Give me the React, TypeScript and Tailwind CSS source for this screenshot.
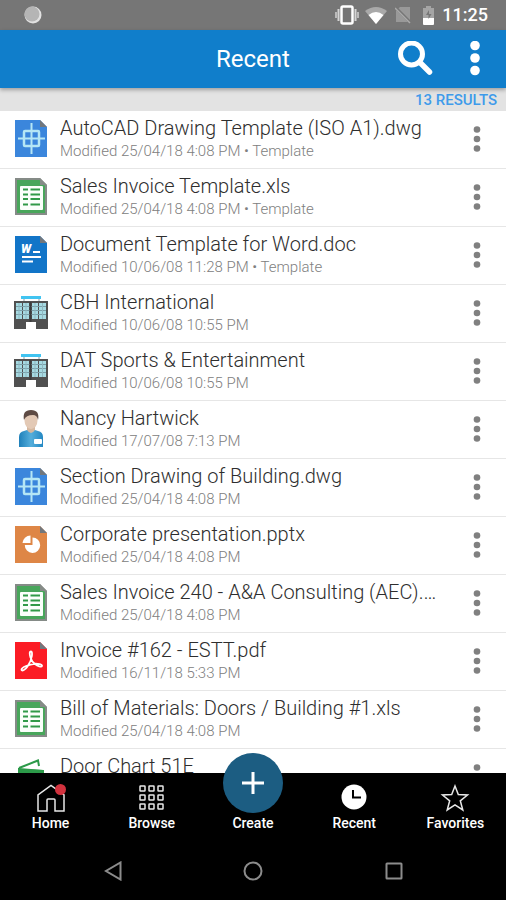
import React from 'react';

type FileKind = 'dwg' | 'xls' | 'doc' | 'ppt' | 'pdf' | 'company' | 'person' | 'chart';

interface RecentItem {
  kind: FileKind;
  title: string;
  meta: string;
}

const items: RecentItem[] = [
  { kind: 'dwg', title: 'AutoCAD Drawing Template (ISO A1).dwg', meta: 'Modified 25/04/18 4:08 PM • Template' },
  { kind: 'xls', title: 'Sales Invoice Template.xls', meta: 'Modified 25/04/18 4:08 PM • Template' },
  { kind: 'doc', title: 'Document Template for Word.doc', meta: 'Modified 10/06/08 11:28 PM • Template' },
  { kind: 'company', title: 'CBH International', meta: 'Modified 10/06/08 10:55 PM' },
  { kind: 'company', title: 'DAT Sports & Entertainment', meta: 'Modified 10/06/08 10:55 PM' },
  { kind: 'person', title: 'Nancy Hartwick', meta: 'Modified 17/07/08 7:13 PM' },
  { kind: 'dwg', title: 'Section Drawing of Building.dwg', meta: 'Modified 25/04/18 4:08 PM' },
  { kind: 'ppt', title: 'Corporate presentation.pptx', meta: 'Modified 25/04/18 4:08 PM' },
  { kind: 'xls', title: 'Sales Invoice 240 - A&A Consulting (AEC).xls', meta: 'Modified 25/04/18 4:08 PM' },
  { kind: 'pdf', title: 'Invoice #162 - ESTT.pdf', meta: 'Modified 16/11/18 5:33 PM' },
  { kind: 'xls', title: 'Bill of Materials: Doors / Building #1.xls', meta: 'Modified 25/04/18 4:08 PM' },
  { kind: 'chart', title: 'Door Chart 51E', meta: 'Modified 25/04/18 4:08 PM' },
];

const Page: React.FC<{ color: string; children: React.ReactNode }> = ({ color, children }) => (
  <svg width="32" height="37" viewBox="0 0 32 37" aria-hidden="true">
    <path d="M0 0H25L32 7V37H0Z" fill={color} />
    <path d="M25 0L32 7H25Z" fill="#72777c" />
    {children}
  </svg>
);

const FileIcon: React.FC<{ kind: FileKind }> = ({ kind }) => {
  switch (kind) {
    case 'dwg':
      return (
        <Page color="#3b86dc">
          <g fill="none" stroke="#b5e6f5" strokeWidth="2">
            <path d="M16.5 3V34M3 18.5H30" />
            <rect x="9" y="11" width="15" height="15" rx="1" strokeWidth="2.5" />
          </g>
        </Page>
      );
    case 'xls':
      return (
        <svg width="32" height="37" viewBox="0 0 32 37" aria-hidden="true">
          <path d="M0 0H25L32 7V37H0Z" fill="#858b87" />
          <path d="M2 2H24.500L30 8V35H2Z" fill="#48a65b" />
          <path d="M25 0L32 7H25Z" fill="#858b87" />
          <rect x="5" y="8" width="23" height="24" rx="1" fill="#fbfffb" />
          <path d="M8 11.500H13M15.500 11.500H25M8 16.500H13M15.500 16.500H25M8 21H13M15.500 21H25M8 26.500H13M15.500 26.500H25" stroke="#319a48" strokeWidth="2" />
        </svg>
      );
    case 'doc':
      return (
        <Page color="#1275c8">
          <text x="6" y="17" fontSize="12" fontWeight="900" fontStyle="italic" fill="#fff" className="font-['Roboto',sans-serif]">W</text>
          <path d="M18 16H25M7 21H26M7 25.500H18" stroke="#fff" strokeWidth="2" />
        </Page>
      );
    case 'ppt':
      return (
        <Page color="#de8646">
          <path d="M17.500 19V11.500A7.700 7.700 0 1 1 9.800 19Z" fill="#fff" />
          <path d="M15.500 17H7.500A8 8 0 0 1 15.500 9.500Z" fill="#fff" />
        </Page>
      );
    case 'pdf':
      return (
        <Page color="#fb1c25">
          <path
            d="M16 9.500C14.200 9.500 14.600 12.500 15.500 15.500C16.200 18 18 20.500 20 22C22.500 24 26.500 25.500 27 24C27.600 22.300 23 21.600 19.500 21.800C14.500 22.100 6.500 25.500 6.500 27.500C6.500 29.600 10 28.300 12.500 24.500C15 20.700 16.500 17 16.900 14C17.200 11 17 9.500 16 9.500Z"
            fill="none"
            stroke="#fff"
            strokeWidth="1.800"
          />
        </Page>
      );
    case 'company':
      return (
        <svg width="34" height="35" viewBox="0 0 34 35" aria-hidden="true">
          <path d="M10 4V7M25 4V7" stroke="#8b9da5" />
          <rect x="7" y="1" width="20" height="3" fill="#41c4f1" />
          <path d="M0 6H34V34H22V27H12V34H0Z" fill="#505050" />
          <path d="M2 8H8V24H2ZM9 8H15V24H9ZM18 8H24V24H18ZM25 8H32V24H25Z" fill="#a6dae2" />
          <path d="M2 11.500H32M2 15.500H32M2 19.500H32" stroke="#7b9fa8" />
          <path d="M5 8V24M12 8V24M21 8V24M28.500 8V24" stroke="#8fb8c1" />
          <path d="M16.500 7V27" stroke="#3c3c3c" strokeWidth="2" />
        </svg>
      );
    case 'person':
      return (
        <svg width="26" height="37" viewBox="0 0 26 37" aria-hidden="true">
          <defs>
            <linearGradient id="shirt" x1="0" y1="0" x2="1" y2="0">
              <stop offset="0" stopColor="#1f80ba" />
              <stop offset="0.5" stopColor="#55aedb" />
              <stop offset="1" stopColor="#2488c3" />
            </linearGradient>
          </defs>
          <path d="M9 15H17V24H9Z" fill="#d5b8a0" />
          <path d="M1 37V27Q1 22 6 21L9 20Q13 26 17 20L20 21Q25 22 25 27V37Z" fill="url(#shirt)" />
          <ellipse cx="13" cy="10.500" rx="6.500" ry="8.500" fill="#e3c9b5" />
          <path d="M6 10Q4 0 13 0Q22 0 20 10Q19 5 15 5Q8 5 6 10Z" fill="#5e4b44" />
          <rect x="16" y="29" width="8" height="5" rx="1" fill="#fff" />
        </svg>
      );
    case 'chart':
      return (
        <svg width="26" height="34" viewBox="0 0 26 34" aria-hidden="true">
          <path d="M1 9L20 1.500L21 7M1 9V33H25V12L1 11" fill="none" stroke="#2c9a49" strokeWidth="2" />
          <path d="M1 9L25 11V14H1Z" fill="#2c9a49" />
        </svg>
      );
  }
};

const StatusBar = () => (
  <div className="flex h-[30px] shrink-0 items-center bg-[#767676] pr-[18px] pl-6 text-white">
    <svg width="18" height="18" viewBox="0 0 18 18" aria-hidden="true">
      <circle cx="9" cy="9" r="8.500" fill="#e2e2e2" />
      <circle cx="8" cy="8" r="7.500" fill="#b5b5b5" />
    </svg>
    <div className="ml-auto flex items-center">
      <svg width="24" height="20" viewBox="0 0 24 20" className="mr-1.5" aria-hidden="true">
        <rect x="6.500" y="1.500" width="11" height="17" rx="1.500" fill="none" stroke="#fff" strokeWidth="2.500" />
        <path d="M3.500 4V16M20.500 4V16" stroke="#d5d5d5" strokeWidth="2" />
        <path d="M1 7V13M23 7V13" stroke="#bbb" strokeWidth="2" />
      </svg>
      <svg width="22" height="17" viewBox="0 0 22 17" className="mr-2" aria-hidden="true">
        <path d="M0 4Q11-4 22 4L11 17Z" fill="#a9a9a9" />
        <path d="M3.500 8Q11 2 18.500 8L11 17Z" fill="#fff" />
      </svg>
      <svg width="16" height="18" viewBox="0 0 16 18" className="mr-3" aria-hidden="true">
        <path d="M5 1H15V16H1V5Z" fill="#999" />
        <path d="M0 1L16 17" stroke="#767676" strokeWidth="3" />
        <path d="M0 2L15 17" stroke="#aaa" strokeWidth="1.500" />
      </svg>
      <svg width="11" height="19" viewBox="0 0 11 19" className="mr-2" aria-hidden="true">
        <path d="M3 0H8V2H11V12H0V2H3Z" fill="#a5a5a5" />
        <path d="M0 12H11V18Q11 19 10 19H1Q0 19 0 18Z" fill="#fff" />
        <path d="M6 4L3 9H5.500V13L8.500 8H6Z" fill="#767676" />
      </svg>
      <span className="text-[18px] leading-5 font-medium">11:25</span>
    </div>
  </div>
);

const AppBar = () => (
  <header className="z-10 grid h-[58px] shrink-0 grid-cols-[1fr_auto_1fr] items-center bg-[#107ecb] text-white shadow-[0_2px_4px_rgba(0,0,0,0.3)]">
    <h1 className="col-start-2 text-2xl font-normal">Recent</h1>
    <div className="flex items-center justify-end pr-[25px]">
      <button type="button" aria-label="Search" className="mr-9">
        <svg width="36" height="36" viewBox="0 0 36 36" className="block" aria-hidden="true">
          <circle cx="14.500" cy="13" r="11" fill="none" stroke="currentColor" strokeWidth="5" />
          <path d="M22.500 21L32.500 31" stroke="currentColor" strokeWidth="5.500" strokeLinecap="round" />
        </svg>
      </button>
      <button type="button" aria-label="More options">
        <svg width="12" height="36" viewBox="0 0 12 36" className="block" fill="currentColor" aria-hidden="true">
          <circle cx="6" cy="4.500" r="4.800" />
          <circle cx="6" cy="17" r="4.800" />
          <circle cx="6" cy="29.500" r="4.800" />
        </svg>
      </button>
    </div>
  </header>
);

const Row: React.FC<{ item: RecentItem }> = ({ item }) => (
  <li className="flex h-[58px] items-center border-b border-[#e6e6e6] pr-[25px] pb-0.5 pl-3">
    <div className="flex w-[38px] shrink-0 justify-center pb-px">
      <FileIcon kind={item.kind} />
    </div>
    <div className="ml-[10px] min-w-0 flex-1 pb-px">
      <p className="truncate text-xl leading-6 font-light text-[#2e2e2e]">{item.title}</p>
      <p className="mt-px truncate text-[15px] leading-5 font-light text-[#808080]">{item.meta}</p>
    </div>
    <button type="button" aria-label={`Options for ${item.title}`} className="ml-8 shrink-0">
      <svg width="8" height="28" viewBox="0 0 8 28" className="block" fill="#808080" aria-hidden="true">
        <circle cx="4" cy="4.500" r="3.300" />
        <circle cx="4" cy="14" r="3.300" />
        <circle cx="4" cy="23.500" r="3.300" />
      </svg>
    </button>
  </li>
);

const tabClass = 'relative flex flex-col items-center pt-[11px] text-sm leading-5 font-medium text-white';

const TabBar = () => (
  <nav className="relative z-10 grid h-[69px] shrink-0 grid-cols-5 bg-black">
    <button type="button" className={tabClass}>
      <svg width="32" height="28" viewBox="0 0 32 28" className="mb-px" aria-hidden="true">
        <path d="M3 27V11L16 1.500L29 11V27H20V16Q20 15 19 15H13Q12 15 12 16V27Z" fill="none" stroke="#e8e8e8" strokeWidth="1.500" />
        <circle cx="25.500" cy="5.500" r="5.500" fill="#d2323e" />
      </svg>
      Home
    </button>
    <button type="button" className={tabClass}>
      <svg width="26" height="28" viewBox="0 0 26 28" className="mb-px" fill="none" stroke="#e8e8e8" strokeWidth="1.500" aria-hidden="true">
        {[2, 11, 20].map((y) =>
          [1, 10, 19].map((x) => <rect key={`${x}-${y}`} x={x} y={y} width="5" height="5" rx="0.500" />)
        )}
      </svg>
      Browse
    </button>
    <button type="button" className={tabClass}>
      <span className="absolute -top-5 flex size-[60px] items-center justify-center rounded-full bg-[#1c5d82]">
        <svg width="24" height="24" viewBox="0 0 24 24" aria-hidden="true">
          <path d="M12 1V23M1 12H23" stroke="#fff" strokeWidth="3" />
        </svg>
      </span>
      <span className="mt-[29px]">Create</span>
    </button>
    <button type="button" aria-current="page" className={tabClass}>
      <svg width="26" height="28" viewBox="0 0 26 28" className="mb-px" aria-hidden="true">
        <circle cx="13" cy="13" r="12.500" fill="#fff" />
        <path d="M12 6V13.500H20" fill="none" stroke="#000" strokeWidth="2" />
      </svg>
      Recent
    </button>
    <button type="button" className={tabClass}>
      <svg width="30" height="28" viewBox="0 0 30 28" className="mb-px" aria-hidden="true">
        <path d="M15 2L18.300 10.500L27.500 11L20.300 16.800L22.800 26L15 20.900L7.200 26L9.700 16.800L2.500 11L11.700 10.500Z" fill="none" stroke="#e8e8e8" strokeWidth="1.500" />
      </svg>
      Favorites
    </button>
  </nav>
);

const SystemBar = () => (
  <div className="flex h-[58px] shrink-0 justify-center bg-black">
    <div className="grid w-5/6 grid-cols-3 place-items-center">
      <button type="button" aria-label="Back">
        <svg width="20" height="20" viewBox="0 0 20 20" className="block" aria-hidden="true">
          <path d="M18.500 1.500V18.500L4 10Z" fill="none" stroke="#8c8c8c" strokeWidth="2" />
        </svg>
      </button>
      <button type="button" aria-label="Home screen">
        <svg width="20" height="20" viewBox="0 0 20 20" className="block" aria-hidden="true">
          <circle cx="10" cy="10" r="8.500" fill="none" stroke="#8c8c8c" strokeWidth="2" />
        </svg>
      </button>
      <button type="button" aria-label="Overview">
        <svg width="20" height="20" viewBox="0 0 20 20" className="block" aria-hidden="true">
          <rect x="2.500" y="2.500" width="15" height="15" rx="0.500" fill="none" stroke="#8c8c8c" strokeWidth="2" />
        </svg>
      </button>
    </div>
  </div>
);

export default function App() {
  return (
    <div className="flex h-screen flex-col bg-white font-['Roboto',sans-serif]">
      <StatusBar />
      <AppBar />
      <div className="shrink-0 bg-[#e3e3e3] pt-0.5 pr-[9px] pb-px text-right text-[15px] leading-5 font-medium text-[#3f9bea]">
        13 RESULTS
      </div>
      <main className="min-h-0 flex-1 overflow-y-auto [scrollbar-width:none]">
        <ul>
          {items.map((item) => (
            <Row key={item.title} item={item} />
          ))}
        </ul>
      </main>
      <TabBar />
      <SystemBar />
    </div>
  );
}
